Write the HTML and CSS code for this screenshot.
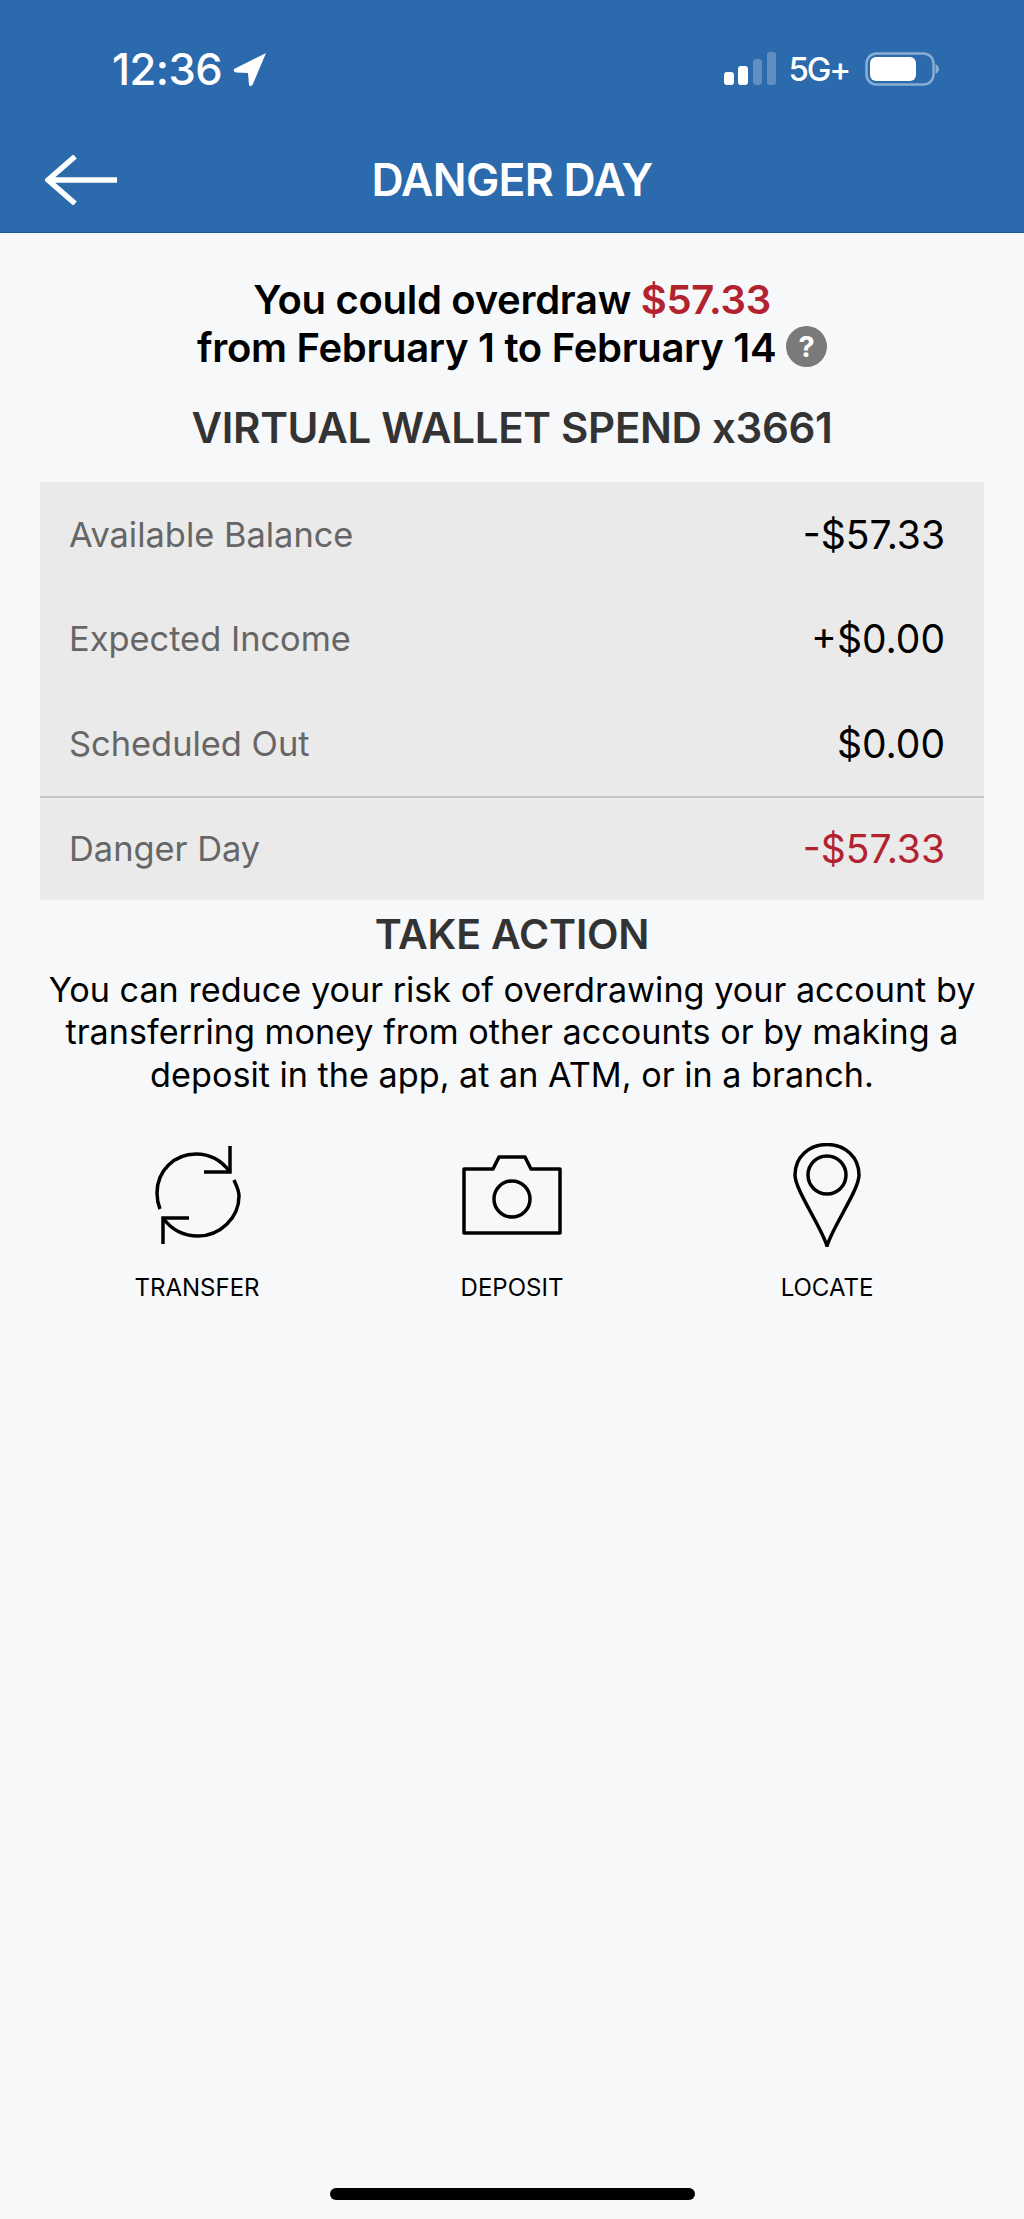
FILE: index.html
```html
<!DOCTYPE html>
<html lang="en">
<head>
    <meta charset="UTF-8">
    <meta name="viewport" content="width=device-width, initial-scale=1.0">
    <title>Danger Day</title>
    <link rel="stylesheet" href="styles.css">
</head>
<body>
    <header class="app-header">
        <div class="status-bar">
            <div class="status-left">
                <span class="clock">12:36</span>
                <svg class="location-icon" viewBox="0 0 34 34">
                    <path d="M33 1 L1 17 Q0 20 3 20.500 L15 21 L16 33 Q17 35 19.500 33 Z" fill="#fff"/>
                </svg>
            </div>
            <div class="status-right">
                <svg class="signal-icon" viewBox="0 0 52 34">
                    <rect x="0" y="20" width="10" height="13" rx="3" fill="#fff"/>
                    <rect x="14" y="14" width="10" height="19" rx="3" fill="#fff"/>
                    <rect x="29" y="7" width="9" height="26" rx="3" fill="#fff" opacity="0.25"/>
                    <rect x="43" y="0" width="9" height="33" rx="3" fill="#fff" opacity="0.25"/>
                </svg>
                <span class="network">5G+</span>
                <svg class="battery-icon" viewBox="0 0 74 34">
                    <rect x="1.500" y="1.500" width="67" height="31" rx="10" fill="none" stroke="#fff" stroke-opacity="0.45" stroke-width="2.500"/>
                    <rect x="5" y="5" width="46" height="24" rx="6" fill="#fff"/>
                    <path d="M70.500 12 Q74 14 74 17 Q74 20 70.500 22 Z" fill="#fff" fill-opacity="0.45"/>
                </svg>
            </div>
        </div>
        <div class="nav-bar">
            <svg class="back-icon" viewBox="0 0 74 50">
                <path d="M72 25 H3 M30 1.500 L3 25 L30 48.500" fill="none" stroke="#fff" stroke-width="5.500"/>
            </svg>
            <h1>DANGER DAY</h1>
        </div>
    </header>

    <main class="content">
        <p class="summary">
            You could overdraw <span class="red">$57.33</span><br>
            from February 1 to February 14
            <span class="help-icon">?</span>
        </p>
        <h2 class="account-name">VIRTUAL WALLET SPEND x3661</h2>

        <div class="balance-table">
            <div class="balance-row"><span class="row-label">Available Balance</span><span class="row-value">-$57.33</span></div>
            <div class="balance-row"><span class="row-label">Expected Income</span><span class="row-value">+$0.00</span></div>
            <div class="balance-row"><span class="row-label">Scheduled Out</span><span class="row-value">$0.00</span></div>
            <div class="balance-row total"><span class="row-label">Danger Day</span><span class="row-value red">-$57.33</span></div>
        </div>

        <h2 class="action-title">TAKE ACTION</h2>
        <p class="action-text">You can reduce your risk of overdrawing your account by transferring money from other accounts or by making a deposit in the app, at an ATM, or in a branch.</p>

        <div class="actions">
            <div class="action">
                <svg class="action-icon" viewBox="0 0 100 104">
                    <g fill="none" stroke="#000" stroke-width="3.500">
                        <path d="M13 66 C11 61 10 56 10 50 C10 28 27 11 49 11 C63 11 75 18 83 29"/>
                        <path d="M83 3 V29 H57"/>
                        <path d="M87 37 C89 42 92 47 92 53 C92 75 73 93 51 93 C36 93 24 86 16 75"/>
                        <path d="M16 101 V75 H42"/>
                    </g>
                </svg>
                <span>TRANSFER</span>
            </div>
            <div class="action">
                <svg class="action-icon" viewBox="0 0 100 104">
                    <g fill="none" stroke="#000" stroke-width="3.500" stroke-linejoin="round">
                        <path d="M2 26 H31 L37 14 H63 L69 26 H98 V90 H2 Z"/>
                        <circle cx="50" cy="56" r="18"/>
                    </g>
                </svg>
                <span>DEPOSIT</span>
            </div>
            <div class="action">
                <svg class="action-icon" viewBox="0 0 100 104">
                    <g fill="none" stroke="#000" stroke-width="3.500">
                        <path d="M50 103 C44 83 18 47 18 32 C18 14 32 1.500 50 1.500 C68 1.500 82 14 82 32 C82 47 56 83 50 103 Z"/>
                        <circle cx="50" cy="32" r="19"/>
                    </g>
                </svg>
                <span>LOCATE</span>
            </div>
        </div>
    </main>

    <div class="home-indicator"></div>
</body>
</html>
```

FILE: styles.css
```css
* {
    margin: 0;
    padding: 0;
    box-sizing: border-box;
}

body {
    font-family: Inter, "Liberation Sans", sans-serif;
    background-color: #f7f8fa;
    height: 2219px;
    display: flex;
    flex-direction: column;
    color: #000;
}

.red {
    color: #b3222f;
}

.app-header {
    height: 233px;
    background: #2a6aad;
    border-bottom: 1px solid #1f5a96;
    color: white;
}

.status-bar {
    height: 138px;
    padding: 0 85px 0 112px;
    display: flex;
    justify-content: space-between;
    align-items: center;
}

.status-left,
.status-right {
    display: flex;
    align-items: center;
}

.clock {
    font-size: 43.500px;
    font-weight: 500;
    letter-spacing: -0.500px;
}

.location-icon {
    width: 34px;
    height: 34px;
    margin-left: 11px;
}

.signal-icon {
    width: 52px;
    height: 34px;
}

.network {
    font-size: 33px;
    font-weight: 500;
    margin-left: 13px;
    letter-spacing: -2.200px;
}

.battery-icon {
    width: 74px;
    height: 34px;
    margin-left: 16px;
}

.nav-bar {
    height: 84px;
    position: relative;
    display: flex;
    justify-content: center;
    align-items: center;
}

.nav-bar h1 {
    font-size: 44.500px;
    font-weight: 600;
    letter-spacing: -0.700px;
}

.back-icon {
    position: absolute;
    left: 45px;
    top: 17px;
    width: 74px;
    height: 50px;
}

.content {
    flex: 1;
    padding: 43px 40px 0;
    text-align: center;
}

.summary {
    font-size: 40px;
    font-weight: 600;
    line-height: 48px;
    letter-spacing: -0.300px;
}

.help-icon {
    display: inline-block;
    width: 41px;
    height: 41px;
    border-radius: 50%;
    background: #7a7a7a;
    color: white;
    font-size: 29px;
    font-weight: 700;
    line-height: 41px;
    vertical-align: 5px;
}

.account-name {
    margin-top: 32px;
    font-size: 42px;
    font-weight: 600;
    line-height: 48px;
    letter-spacing: -0.300px;
    color: #333;
}

.balance-table {
    margin-top: 30px;
    background: #eaeaeb;
}

.balance-row {
    height: 104.500px;
    padding: 0 39px 0 29px;
    display: flex;
    justify-content: space-between;
    align-items: center;
}

.balance-row.total {
    border-top: 2px solid #c6c6c8;
}

.row-label {
    font-size: 34.400px;
    color: #666;
}

.row-value {
    font-size: 39px;
}

.action-title {
    margin-top: 10px;
    font-size: 41px;
    font-weight: 600;
    line-height: 48px;
    letter-spacing: -0.200px;
    color: #333;
}

.action-text {
    margin-top: 11px;
    font-size: 34.200px;
    line-height: 42.400px;
}

.actions {
    margin-top: 47px;
    display: flex;
    justify-content: space-between;
    padding: 0 73px;
}

.action {
    width: 168px;
    display: flex;
    flex-direction: column;
    align-items: center;
    gap: 26px;
    font-size: 24px;
}

.action-icon {
    width: 100px;
    height: 104px;
}

.home-indicator {
    position: absolute;
    left: 330px;
    top: 2188px;
    width: 365px;
    height: 12px;
    border-radius: 6px;
    background: #000;
}
```
